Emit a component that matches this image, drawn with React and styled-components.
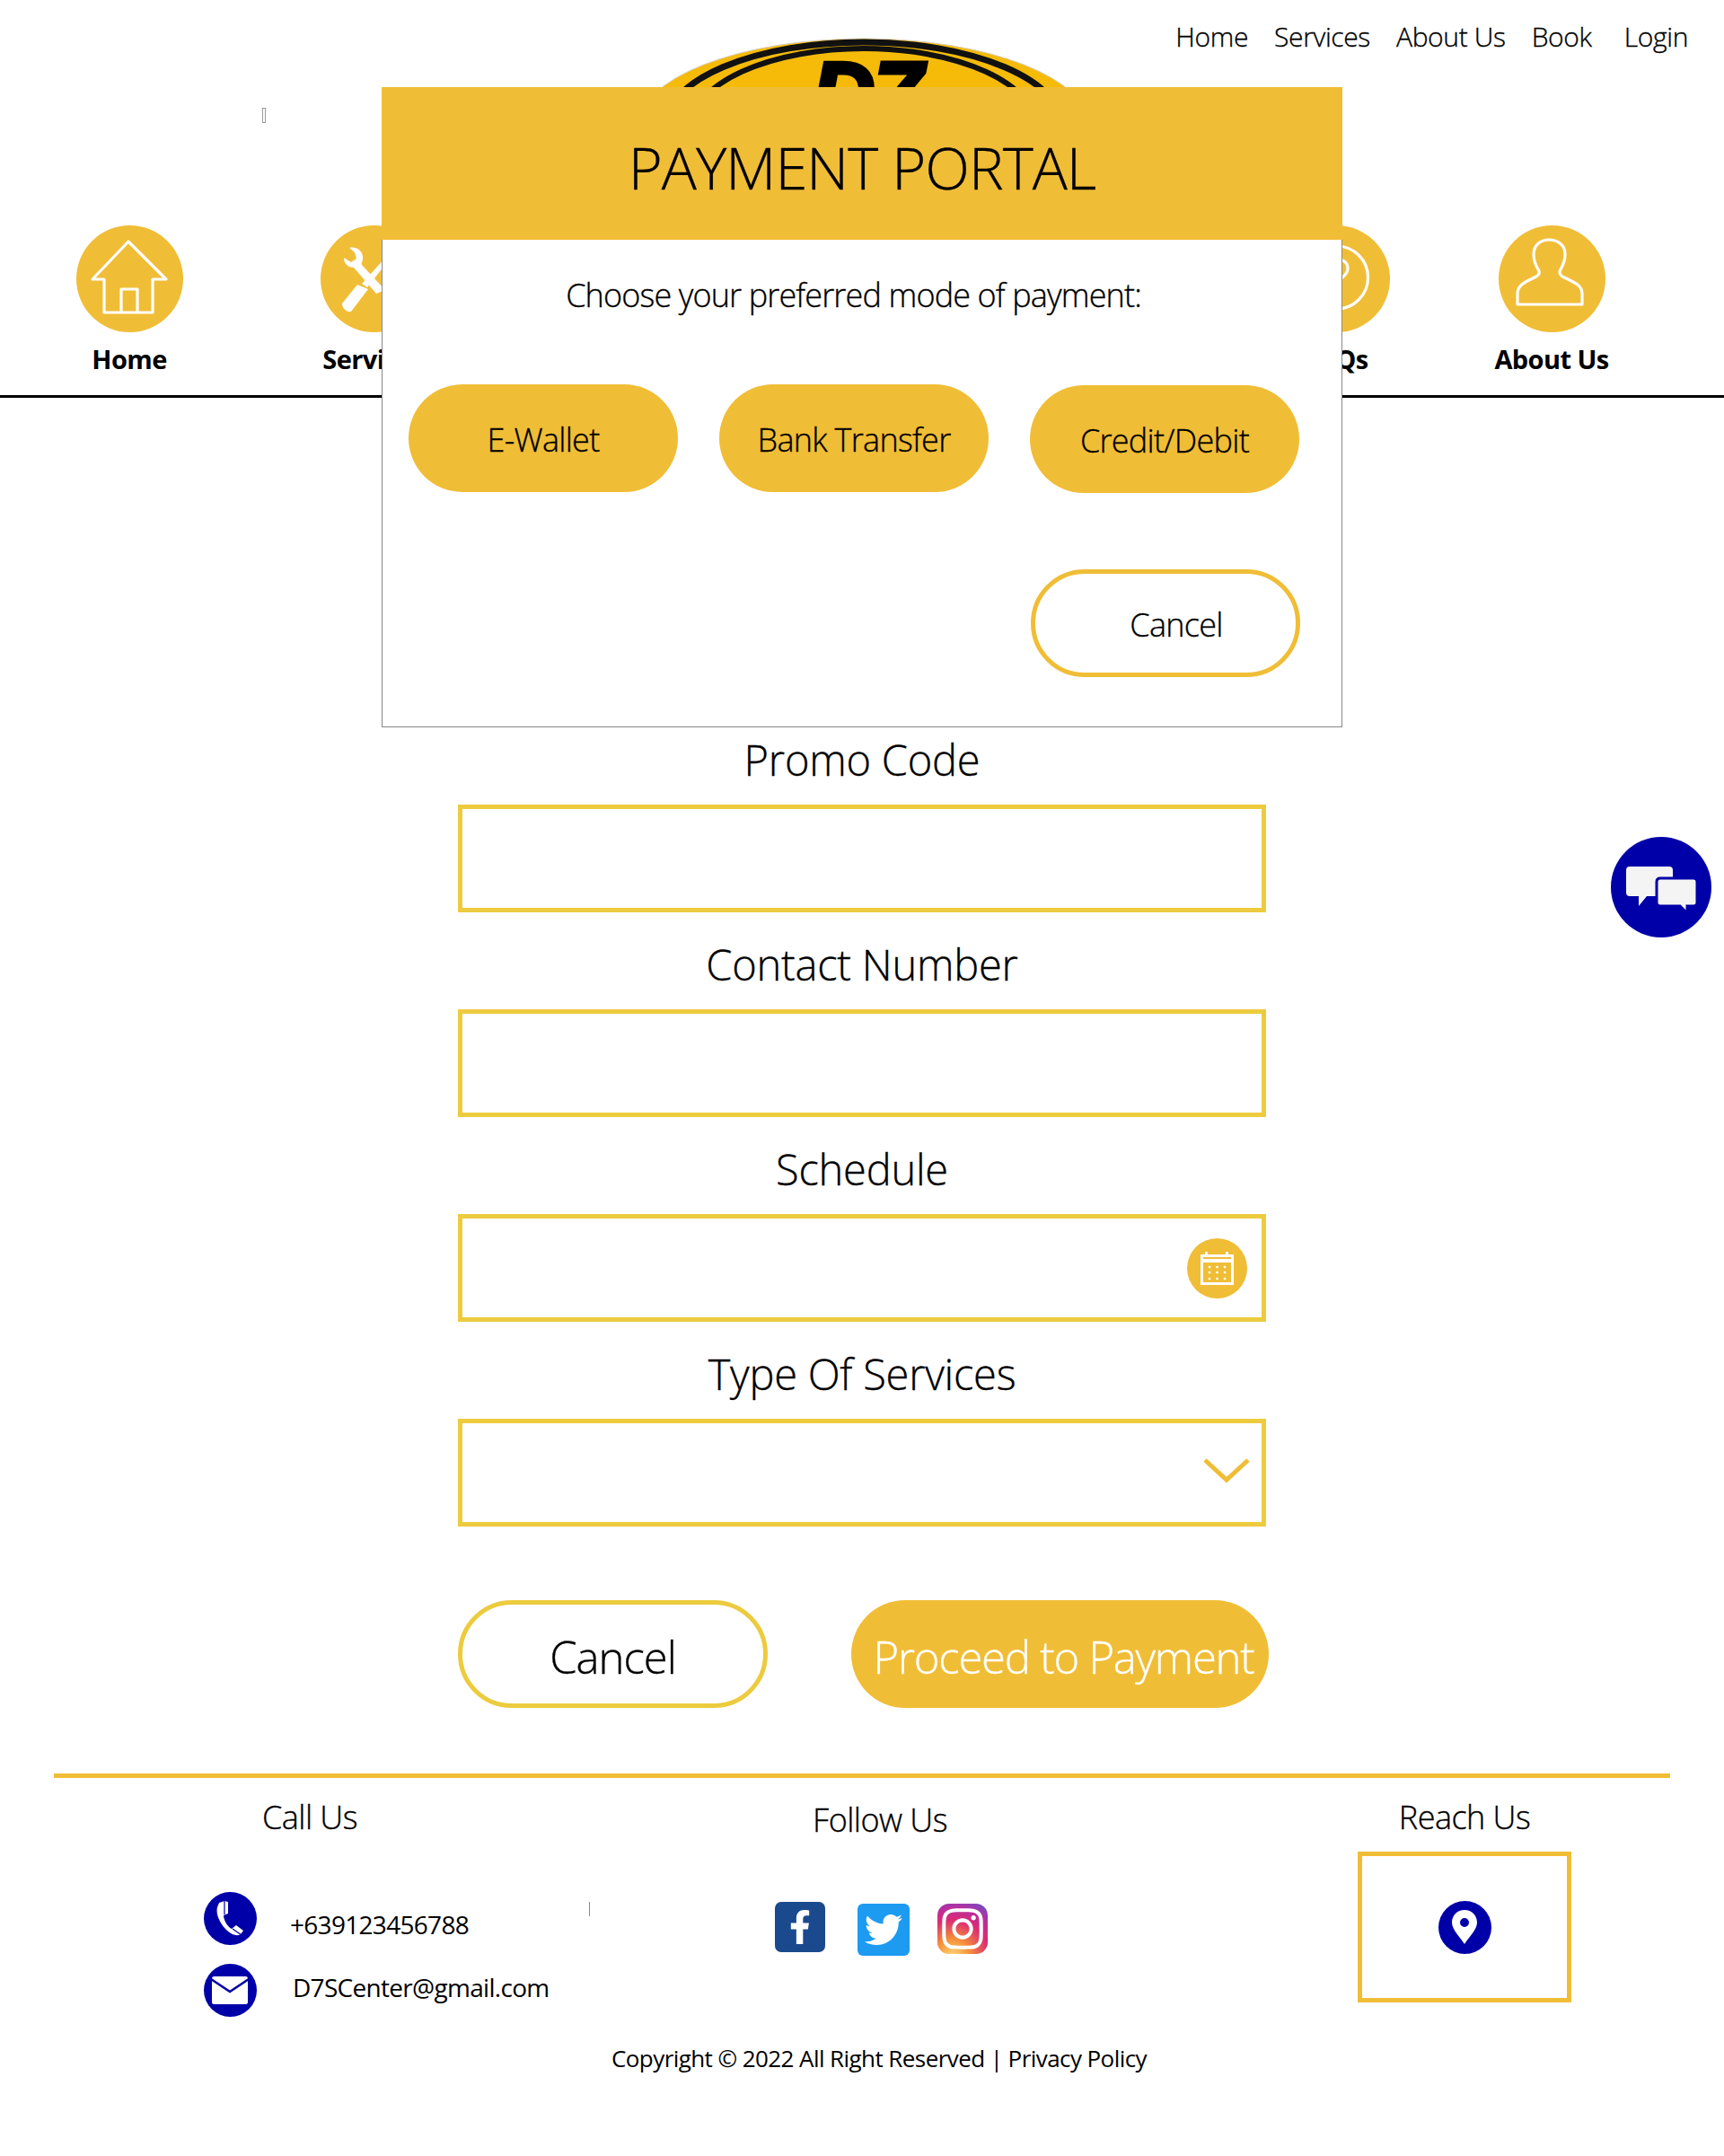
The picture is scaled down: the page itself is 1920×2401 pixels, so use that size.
import React from "react";
import styled, { createGlobalStyle, css } from "styled-components";
import { FaFacebookF, FaTwitter, FaInstagram } from "react-icons/fa";

const GOLD = "#f0bd36";
const FIELD = "#eccb3e";
const NAVY = "#0000a8";

// Open Sans Light with a hairline stroke sits closest to the reference's text weight
const lightText = css`
  font-weight: 300;
  -webkit-text-stroke: 0.35px currentColor;
`;

const GlobalStyle = createGlobalStyle`
  body {
    margin: 0;
    background: #fff;
    color: #000;
    font-family: "Open Sans", "Noto Sans", sans-serif;
  }
  * { box-sizing: border-box; }
`;

const Page = styled.div`
  position: relative;
  width: 1920px;
  height: 2401px;
  overflow: hidden;
`;

const Masthead = styled.header`
  display: grid;
  grid-template-columns: 710px 504px 1fr;
  height: 251px;
`;

const StrayMark = styled.div`
  width: 4px;
  height: 17px;
  margin: 120px 0 0 292px;
  border: 1px solid #999;
`;

const LogoWrap = styled.div`
  padding-top: 42px;
`;

const TopNav = styled.nav`
  display: flex;
  justify-content: flex-end;
  gap: 29px;
  padding: 20px 40px 0 0;
`;

const TopLink = styled.a`
  font-size: 30px;
  ${lightText}
  line-height: 42px;
  letter-spacing: -0.012em;
  white-space: nowrap;
  margin-left: ${(props) => props.$shift || 0}px;
`;

const IconNav = styled.nav`
  display: grid;
  grid-template-columns: 288px 256px 824px 240px 240px;
  height: 192px;
  border-bottom: 3px solid #000;
`;

const IconItem = styled.a`
  display: flex;
  flex-direction: column;
  align-items: center;
  grid-column: ${(props) => props.$col};
`;

const IconCircle = styled.div`
  width: 119px;
  height: 119px;
  border-radius: 50%;
  background: ${GOLD};
  svg {
    display: block;
  }
`;

const IconLabel = styled.span`
  margin-top: 10px;
  font-size: 29px;
  line-height: 40px;
  font-weight: 700;
  letter-spacing: -0.02em;
`;

const Form = styled.form`
  width: 900px;
  margin: 345px auto 0;
`;

const Field = styled.div`
  position: relative;
`;

const FieldLabel = styled.label`
  display: block;
  height: 108px;
  padding-top: 26px;
  font-size: 47px;
  ${lightText}
  line-height: 64px;
  text-align: center;
  letter-spacing: -0.005em;
`;

const TextBox = styled.input`
  display: block;
  width: 100%;
  height: 120px;
  border: 5px solid ${FIELD};
  background: #fff;
  outline: none;
`;

const CalendarBadge = styled.div`
  position: absolute;
  right: 21px;
  bottom: 26px;
  width: 67px;
  height: 67px;
  border-radius: 50%;
  background: ${GOLD};
`;

const Chevron = styled.svg`
  position: absolute;
  right: 18px;
  bottom: 45px;
`;

const Actions = styled.div`
  display: flex;
  gap: 93px;
  margin-top: 82px;
  width: 905px;
`;

const OutlineAction = styled.button`
  width: 345px;
  height: 120px;
  padding: 5px 0 0;
  border: 5px solid ${FIELD};
  border-radius: 60px;
  background: #fff;
  font: inherit;
  font-size: 49px;
  ${lightText}
  letter-spacing: -0.02em;
`;

const SolidAction = styled.button`
  width: 465px;
  height: 120px;
  padding: 5px 0 0 8px;
  border: 0;
  border-radius: 60px;
  background: ${GOLD};
  color: #fff;
  font: inherit;
  font-size: 49px;
  ${lightText}
  letter-spacing: -0.025em;
  white-space: nowrap;
`;

const Footer = styled.footer`
  margin: 73px 60px 0;
  border-top: 5px solid ${GOLD};
  display: grid;
  grid-template-columns: 630px 580px 1fr;
`;

const CallColumn = styled.div`
  padding-left: 167px;
  position: relative;
`;

const ColumnTitle = styled.h3`
  margin: 0;
  font-size: 36px;
  line-height: 50px;
  ${lightText}
  letter-spacing: -0.015em;
  padding-top: ${(props) => props.$top || 19}px;
  text-align: ${(props) => props.$align || "center"};
  padding-left: ${(props) => props.$indent || 0}px;
`;

const ContactRow = styled.div`
  display: flex;
  align-items: flex-start;
  gap: ${(props) => props.$gap}px;
  margin-top: ${(props) => props.$top}px;
`;

const Round = styled.div`
  flex: none;
  display: flex;
  align-items: center;
  justify-content: center;
  width: 59px;
  height: 59px;
  border-radius: 50%;
  background: ${NAVY};
  color: #fff;
`;

const ContactText = styled.span`
  font-size: 28px;
  line-height: 38px;
  letter-spacing: -0.025em;
  margin-top: ${(props) => props.$top}px;
`;

const ThinMark = styled.div`
  position: absolute;
  left: 596px;
  top: 138px;
  width: 1px;
  height: 16px;
  background: #888;
`;

const FollowColumn = styled.div`
  display: flex;
  flex-direction: column;
  align-items: center;
`;

const SocialRow = styled.div`
  display: flex;
  align-items: flex-start;
  margin-top: 66px;
  padding-left: 3px;
  gap: 33px;
`;

const Social = styled.a`
  display: flex;
  align-items: center;
  justify-content: center;
  width: ${(props) => props.$size}px;
  height: ${(props) => props.$size}px;
  border-radius: ${(props) => props.$radius}px;
  background: ${(props) => props.$bg};
  color: #fff;
  margin-top: ${(props) => props.$top || 0}px;
  margin-left: ${(props) => props.$left || 0}px;
`;

const ReachColumn = styled.div`
  width: 238px;
  margin-left: 242px;
`;

const MapBox = styled.a`
  display: flex;
  align-items: center;
  justify-content: center;
  height: 168px;
  margin-top: 13px;
  border: 5px solid ${GOLD};
`;

const Copyright = styled.p`
  margin: 28px 0 0;
  padding-left: 38px;
  font-size: 26px;
  line-height: 36px;
  text-align: center;
  letter-spacing: -0.022em;
`;

const ChatButton = styled.button`
  position: absolute;
  left: 1794px;
  top: 932px;
  width: 112px;
  height: 112px;
  padding: 0;
  border: 0;
  border-radius: 50%;
  background: ${NAVY};
`;

const Modal = styled.section`
  position: absolute;
  left: 425px;
  top: 97px;
  width: 1070px;
  height: 713px;
  background: #fff;
  border: 1px solid #888;
  border-top: 0;
`;

const ModalHead = styled.h2`
  margin: 0 -1px;
  height: 170px;
  background: ${GOLD};
  font-size: 65px;
  ${lightText}
  line-height: 178px;
  text-align: center;
  letter-spacing: -0.015em;
`;

const ModalPrompt = styled.p`
  margin: 40px 19px 0 0;
  font-size: 36px;
  ${lightText}
  line-height: 44px;
  text-align: center;
  letter-spacing: -0.024em;
`;

const ModeRow = styled.div`
  display: flex;
  align-items: flex-start;
  gap: 46px;
  margin: 77px 0 0 29px;
`;

const ModeButton = styled.button`
  width: 300px;
  height: 120px;
  padding: 3px 0 0;
  margin-top: ${(props) => props.$drop || 0}px;
  border: 0;
  border-radius: 60px;
  background: ${GOLD};
  font: inherit;
  font-size: 36px;
  ${lightText}
  letter-spacing: -0.02em;
`;

const ModalFoot = styled.div`
  display: flex;
  justify-content: flex-end;
  margin: 85px 46px 0 0;
`;

const ModalCancel = styled.button`
  width: 300px;
  height: 120px;
  padding: 3px 0 0 24px;
  border: 5px solid ${GOLD};
  border-radius: 60px;
  background: #fff;
  font: inherit;
  font-size: 36px;
  ${lightText}
  letter-spacing: -0.02em;
`;

function Logo() {
  return (
    <svg width="504" height="200" viewBox="0 0 504 200">
      <ellipse cx="252" cy="100" rx="252" ry="99" fill="#f5bb08" stroke="#d8cfc0" strokeWidth="1" />
      <ellipse cx="252" cy="100" rx="222" ry="95" fill="none" stroke="#111" strokeWidth="7" />
      <ellipse cx="252" cy="100" rx="192" ry="88" fill="none" stroke="#111" strokeWidth="6" />
      <text
        x="256"
        y="95"
        textAnchor="middle"
        fontFamily="Liberation Sans"
        fontWeight="700"
        fontStyle="italic"
        fontSize="96"
        stroke="#000"
        strokeWidth="5"
      >
        D7
      </text>
    </svg>
  );
}

function HomeIcon() {
  return (
    <svg width="119" height="119" viewBox="0 0 119 119" fill="none" stroke="#fff" strokeWidth="3.2" strokeLinejoin="round">
      <path d="M58 18 L18 60 H31 V97 H85 V60 H100 Z" />
      <path d="M50 97 V71 H68 V97" />
    </svg>
  );
}

function ToolsIcon() {
  return (
    <svg width="119" height="119" viewBox="0 0 119 119" fill="#fff">
      <path d="M32 25 C40 23 48 29 47 37 C47 40 45 42 46 44 L72 72 L62 76 L37 47 C31 47 26 43 26 36 L34 41 L40 37 L38 30 Z" />
      <path d="M24 87 L41 66 L53 71 L34 96 C30 97 24 93 24 87 Z" />
      <path d="M46 65 L72 36 L76 39 L52 69 Z" />
    </svg>
  );
}

function FaqIcon() {
  return (
    <svg width="119" height="119" viewBox="0 0 119 119" fill="none" stroke="#fff" strokeWidth="3.2">
      <circle cx="59.5" cy="58" r="35" />
      <path d="M48 48 C48 34 72 34 72 48 C72 58 60 58 60 68" />
      <circle cx="60" cy="78" r="1.5" />
    </svg>
  );
}

function UserIcon() {
  return (
    <svg width="119" height="119" viewBox="0 0 119 119" fill="none" stroke="#fff" strokeWidth="3.2" strokeLinejoin="round">
      <path d="M21 88 V76 C21 66 30 63 42 57 C45 55 46 52 44 49 C41 44 39 38 39 32 C39 22 47 16 56 16 C66 16 74 22 74 32 C74 38 72 44 69 49 C67 52 68 55 71 57 C83 63 93 66 93 76 V88 Z" />
    </svg>
  );
}

function CalendarIcon() {
  return (
    <svg width="67" height="67" viewBox="0 0 67 67" fill="#fff">
      <path
        fillRule="evenodd"
        d="M15 18 H20 V15 H23 V18 H43 V15 H46 V18 H52 V52 H15 Z M18 21 V23 H49 V21 Z M18 27 V49 H49 V27 Z"
      />
      {[25, 33.5, 42].map((x) =>
        [32, 38, 45].map((y) => <rect key={`${x}-${y}`} x={x - 1.2} y={y - 1.2} width="2.4" height="2.4" />)
      )}
    </svg>
  );
}

function ChatIcon() {
  return (
    <svg width="112" height="112" viewBox="0 0 112 112">
      <path
        fill="#f4f4f4"
        d="M21 33 H65 Q69 33 69 37 V66 H40 L31 77 V66 H21 Q17 66 17 62 V37 Q17 33 21 33 Z"
      />
      <path
        fill="#f4f4f4"
        stroke={NAVY}
        strokeWidth="3"
        d="M55 46 H92 Q96 46 96 50 V73 Q96 77 92 77 H85 V85 L77 77 H55 Q51 77 51 73 V50 Q51 46 55 46 Z"
      />
    </svg>
  );
}

function PhoneIcon() {
  return (
    <svg width="59" height="59" viewBox="0 0 59 59">
      <path
        fill="#fff"
        d="M17 12 L23 10 L27 11 L27 24 L22 26 C22 32 27 39 31 41 L36 37 L44 43 L41 47 C36 50 30 47 25 42 C18 35 13 25 15 17 Z"
      />
      <path fill="none" stroke={NAVY} strokeWidth="1.2" d="M23 10 V25 M32 41 L42 48" />
    </svg>
  );
}

function MailIcon() {
  return (
    <svg width="59" height="59" viewBox="0 0 59 59">
      <rect x="9" y="14" width="40" height="31" rx="2.5" fill="#fff" />
      <path fill="none" stroke={NAVY} strokeWidth="2.6" d="M8 17 L29 31 L50 17" />
    </svg>
  );
}

function PinIcon() {
  return (
    <svg width="28" height="38" viewBox="0 0 28 38">
      <path
        fill="#fff"
        fillRule="evenodd"
        d="M14 0 C6 0 0 6 0 14 C0 22 9 30 14 38 C19 30 28 22 28 14 C28 6 22 0 14 0 Z M14 9 A5 5 0 1 1 14 19 A5 5 0 1 1 14 9 Z"
      />
    </svg>
  );
}

function App() {
  return (
    <Page>
      <GlobalStyle />
      <Masthead>
        <StrayMark />
        <LogoWrap>
          <Logo />
        </LogoWrap>
        <TopNav>
          <TopLink>Home</TopLink>
          <TopLink>Services</TopLink>
          <TopLink>About Us</TopLink>
          <TopLink>Book</TopLink>
          <TopLink $shift={7}>Login</TopLink>
        </TopNav>
      </Masthead>

      <IconNav>
        <IconItem $col={1}>
          <IconCircle>
            <HomeIcon />
          </IconCircle>
          <IconLabel>Home</IconLabel>
        </IconItem>
        <IconItem $col={2}>
          <IconCircle>
            <ToolsIcon />
          </IconCircle>
          <IconLabel>Services</IconLabel>
        </IconItem>
        <IconItem $col={4}>
          <IconCircle>
            <FaqIcon />
          </IconCircle>
          <IconLabel>FAQs</IconLabel>
        </IconItem>
        <IconItem $col={5}>
          <IconCircle>
            <UserIcon />
          </IconCircle>
          <IconLabel>About Us</IconLabel>
        </IconItem>
      </IconNav>

      <Form>
        <Field>
          <FieldLabel>Promo Code</FieldLabel>
          <TextBox />
        </Field>
        <Field>
          <FieldLabel>Contact Number</FieldLabel>
          <TextBox />
        </Field>
        <Field>
          <FieldLabel>Schedule</FieldLabel>
          <TextBox />
          <CalendarBadge>
            <CalendarIcon />
          </CalendarBadge>
        </Field>
        <Field>
          <FieldLabel>Type Of Services</FieldLabel>
          <TextBox as="div" />
          <Chevron width="52" height="32" viewBox="0 0 52 32" fill="none" stroke={GOLD} strokeWidth="5">
            <path d="M2 3 L26 25 L50 3" />
          </Chevron>
        </Field>
        <Actions>
          <OutlineAction type="button">Cancel</OutlineAction>
          <SolidAction type="button">Proceed to Payment</SolidAction>
        </Actions>
      </Form>

      <Footer>
        <CallColumn>
          <ColumnTitle $align="left" $indent={65}>
            Call Us
          </ColumnTitle>
          <ContactRow $gap={37} $top={58}>
            <Round>
              <PhoneIcon />
            </Round>
            <ContactText $top={17}>+639123456788</ContactText>
          </ContactRow>
          <ContactRow $gap={40} $top={21}>
            <Round>
              <MailIcon />
            </Round>
            <ContactText $top={7}>D7SCenter@gmail.com</ContactText>
          </ContactRow>
          <ThinMark />
        </CallColumn>
        <FollowColumn>
          <ColumnTitle $top={22}>Follow Us</ColumnTitle>
          <SocialRow>
            <Social $size={56} $radius={7} $bg="#1a4a8d">
              <FaFacebookF size={38} />
            </Social>
            <Social $size={58} $radius={6} $bg="#1d9bf0" $top={2} $left={3}>
              <FaTwitter size={42} />
            </Social>
            <Social
              $size={56}
              $radius={13}
              $top={2}
              $left={-2}
              $bg="radial-gradient(circle at 30% 105%, #fdd775 0%, #f58f3a 28%, #dc2a74 58%, #b52fa0 78%, #5a57cf 100%)"
            >
              <FaInstagram size={52} />
            </Social>
          </SocialRow>
        </FollowColumn>
        <ReachColumn>
          <ColumnTitle>Reach Us</ColumnTitle>
          <MapBox>
            <Round>
              <PinIcon />
            </Round>
          </MapBox>
        </ReachColumn>
      </Footer>
      <Copyright>Copyright © 2022 All Right Reserved | Privacy Policy</Copyright>

      <ChatButton type="button" aria-label="Chat">
        <ChatIcon />
      </ChatButton>

      <Modal>
        <ModalHead>PAYMENT PORTAL</ModalHead>
        <ModalPrompt>Choose your preferred mode of payment:</ModalPrompt>
        <ModeRow>
          <ModeButton type="button">E-Wallet</ModeButton>
          <ModeButton type="button">Bank Transfer</ModeButton>
          <ModeButton type="button" $drop={1}>
            Credit/Debit
          </ModeButton>
        </ModeRow>
        <ModalFoot>
          <ModalCancel type="button">Cancel</ModalCancel>
        </ModalFoot>
      </Modal>
    </Page>
  );
}

export default App;
